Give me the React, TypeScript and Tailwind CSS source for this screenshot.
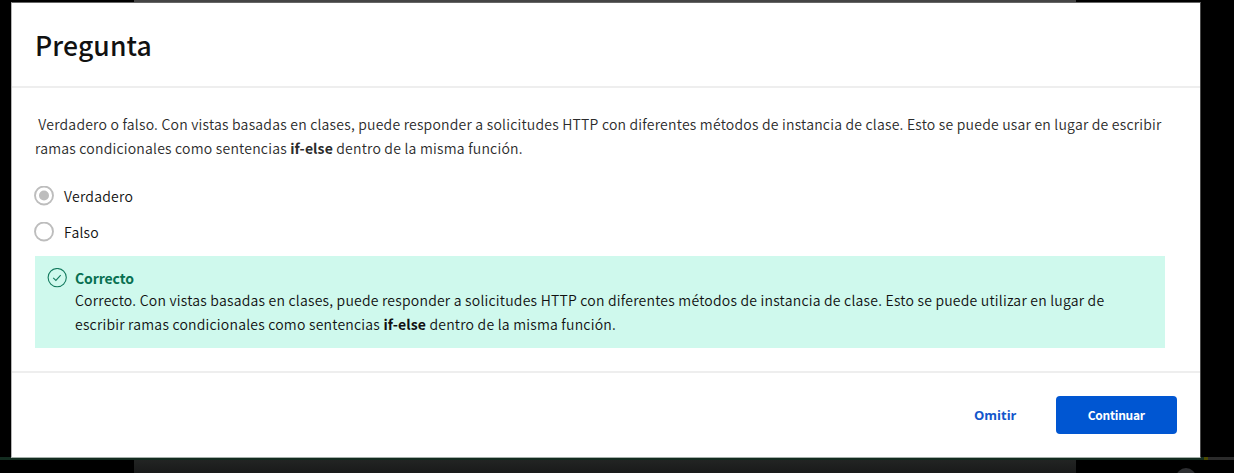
import React from "react";

const body = "font-['Noto_Sans_CJK_SC',sans-serif]";

function Radio({ label, checked }: { label: string; checked?: boolean }) {
  return (
    <label className="flex h-9 items-center">
      <svg className="-ml-px block size-5 shrink-0" viewBox="0 0 20 20" fill="none">
        <circle cx="10" cy="9.5" r="9" stroke="#bdbdbd" strokeWidth="1.9" />
        {checked && <circle cx="10" cy="9.5" r="5" fill="#bdbdbd" />}
      </svg>
      <span className="ml-2.5 text-[14px] font-[350] leading-6 tracking-[0.25px] text-[#111111]">{label}</span>
    </label>
  );
}

function Backdrop() {
  return (
    <div className="absolute inset-0 flex flex-col">
      <div className="flex h-[3px] shrink-0">
        <div className="w-[134px]" />
        <div className="w-[942px] bg-[#444444]" />
      </div>
      <div className="flex-1" />
      <div className="flex h-[3px] shrink-0">
        <div className="w-[1204px] bg-[#132c20]" />
        <div className="w-1 bg-[#4c4a00]" />
        <div className="flex-1 bg-[#2b2b2b]" />
      </div>
      <div className="flex h-[13px] shrink-0 overflow-hidden">
        <div className="w-[134px]" />
        <div className="w-[942px] bg-gradient-to-b from-[#222423] to-[#191a1a]" />
        <div className="ml-[100px] mt-2 size-5 shrink-0 rounded-full bg-[#2d2e31]" />
      </div>
    </div>
  );
}

export default function App() {
  return (
    <div className={`${body} relative h-[473px] w-[1234px] overflow-hidden bg-black`}>
      <Backdrop />
      <section className="relative ml-[11px] mt-0.5 flex h-[456px] w-[1190px] flex-col border border-t-[#666666] border-r-[#4a4a4a] border-b-[#a5b0aa] border-l-[#b5b5b5] bg-white">
        <header className="flex h-[85px] shrink-0 items-center border-b-2 border-[#eeeeee] px-[23px]">
          <h1 className="text-[26.5px] font-medium leading-8 tracking-[0.15px] text-[#111111]">Pregunta</h1>
        </header>
        <main className="h-[285px] shrink-0 border-b-2 border-[#eeeeee] px-[23px] pt-6">
          <p className="whitespace-nowrap text-[14px] font-[350] leading-6 tracking-[0.214px] text-[#2b2b2b]">
            &nbsp;Verdadero o falso. Con vistas basadas en clases, puede responder a solicitudes HTTP con diferentes métodos de instancia de clase. Esto se puede usar en lugar de escribir
            <br />
            ramas condicionales como sentencias <b className="font-bold tracking-[0.1px]">if-else</b> dentro de la misma función.
          </p>
          <div className="mt-[18px]">
            <Radio label="Verdadero" checked />
            <Radio label="Falso" />
          </div>
          <div className="mt-[6px] flex h-[92px] w-[1130px] bg-[#cff9ed] pl-3 pt-[11px]">
            <svg className="mt-px block size-5 shrink-0" viewBox="0 0 20 20" fill="none" stroke="#137a5e" strokeWidth="1.1">
              <circle cx="10.2" cy="9.6" r="9.1" />
              <path d="M6.2 9.8l2.7 2.6 4.8-5.3" />
            </svg>
            <div className="ml-2 whitespace-nowrap text-[14px] font-[350] leading-6 tracking-[0.217px] text-[#111111]">
              <h2 className="h-[21px] font-bold leading-[22px] tracking-[-0.1px] text-[#087051]">Correcto</h2>
              <p>
                Correcto. Con vistas basadas en clases, puede responder a solicitudes HTTP con diferentes métodos de instancia de clase. Esto se puede utilizar en lugar de
                <br />
                escribir ramas condicionales como sentencias <b className="font-bold tracking-[0.1px]">if-else</b> dentro de la misma función.
              </p>
            </div>
          </div>
        </main>
        <footer className="flex flex-1 items-center justify-end pr-[23.5px]">
          <button className="mr-[39.5px] mt-px font-['Open_Sans',sans-serif] text-[13px] font-bold text-[#1256cc]">Omitir</button>
          <button className="h-[38px] w-[120.5px] rounded bg-[#0056d2] text-[12px] font-bold tracking-[-0.25px] text-white">Continuar</button>
        </footer>
      </section>
    </div>
  );
}
